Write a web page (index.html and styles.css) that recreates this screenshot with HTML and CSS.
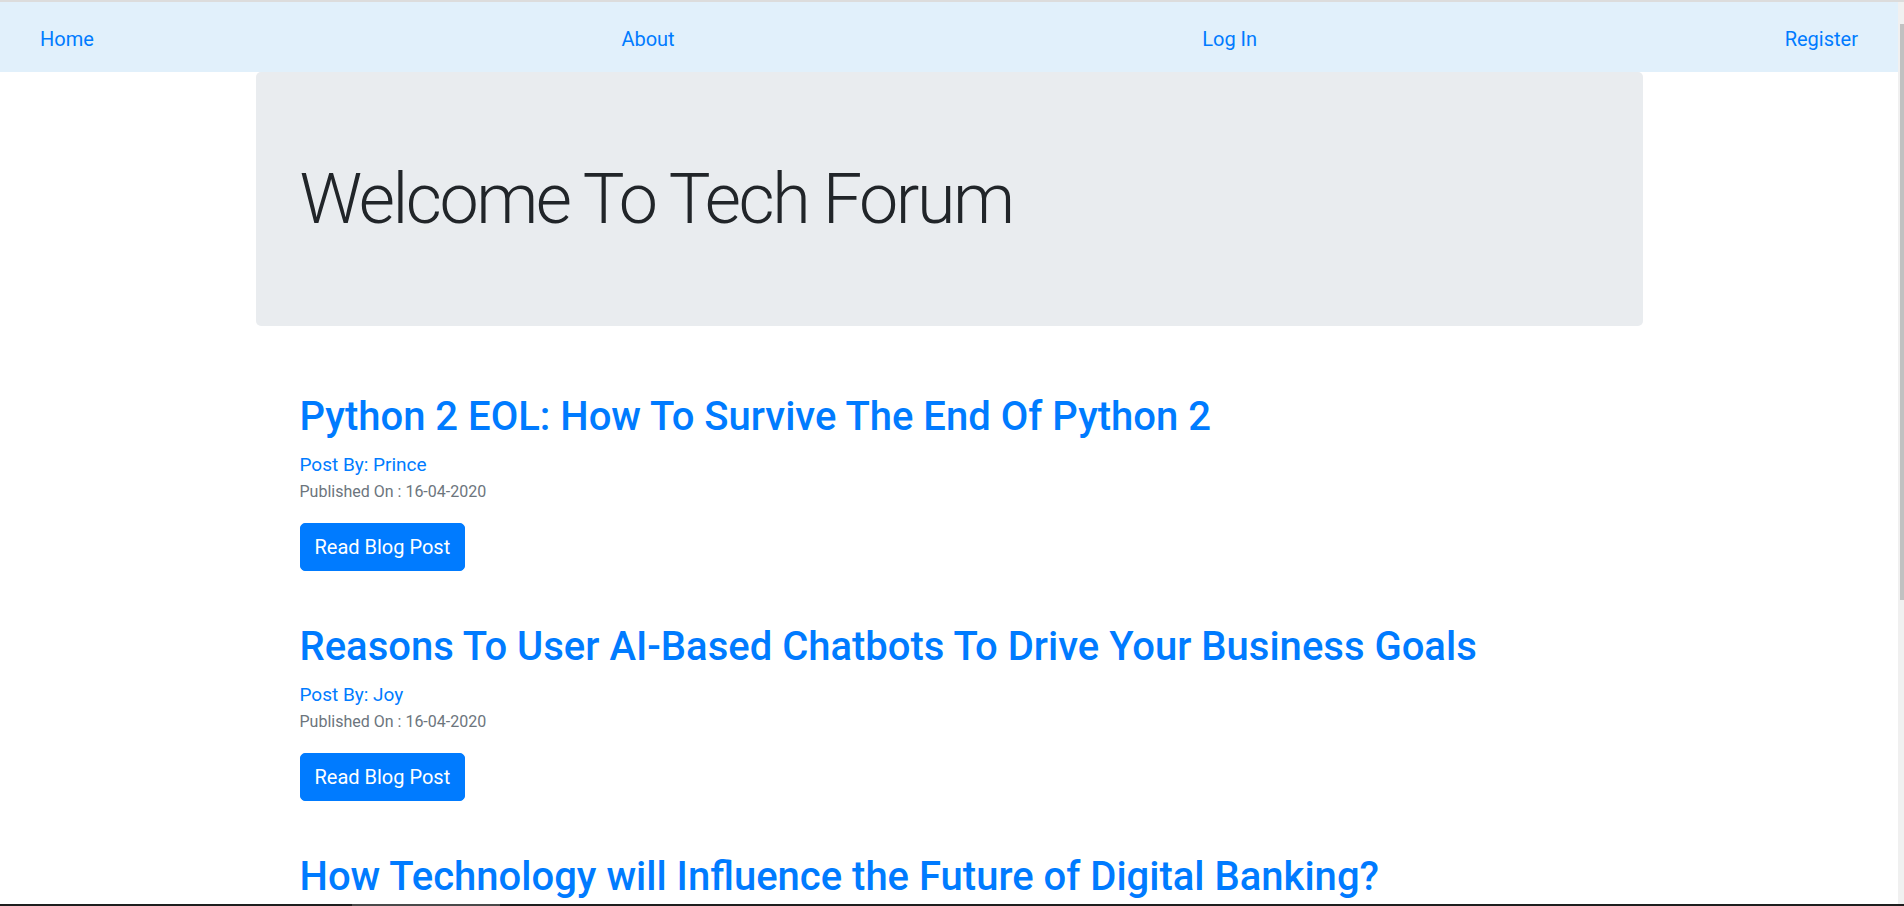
FILE: index.html
```html
<!DOCTYPE html>
<html lang="en">
<head>
<meta charset="utf-8">
<title>Tech Forum</title>
<link rel="stylesheet" href="styles.css">
</head>
<body>
<div class="topline"></div>
<div class="frame">
  <div class="page">
    <nav class="navbar">
      <a class="nav-link" href="#">Home</a>
      <a class="nav-link" href="#">About</a>
      <a class="nav-link" href="#">Log In</a>
      <a class="nav-link" href="#">Register</a>
    </nav>
    <div class="container">
      <header class="jumbotron">
        <h1 class="display">Welcome To Tech Forum</h1>
      </header>
      <main class="posts">
        <article class="post">
          <h1 class="post-title">Python 2 EOL: How To Survive The End Of Python 2</h1>
          <p class="post-author">Post By: Prince</p>
          <p class="post-date">Published On : 16-04-2020</p>
          <a class="btn" href="#">Read Blog Post</a>
        </article>
        <article class="post">
          <h1 class="post-title">Reasons To User AI-Based Chatbots To Drive Your Business Goals</h1>
          <p class="post-author">Post By: Joy</p>
          <p class="post-date">Published On : 16-04-2020</p>
          <a class="btn" href="#">Read Blog Post</a>
        </article>
        <article class="post">
          <h1 class="post-title">How Technology will Influence the Future of Digital Banking?</h1>
          <p class="post-author">Post By: Prince</p>
          <p class="post-date">Published On : 16-04-2020</p>
          <a class="btn" href="#">Read Blog Post</a>
        </article>
      </main>
    </div>
  </div>
  <div class="scrollbar"><div class="scroll-thumb"></div></div>
</div>
<div class="bottomline"><span class="bottom-seg"></span></div>
</body>
</html>
```

FILE: styles.css
```css
html, body {
  margin: 0;
  padding: 0;
  height: 100%;
  overflow: hidden;
}

body {
  display: flex;
  flex-direction: column;
  font-family: Roboto, "Open Sans", sans-serif;
  color: #212529;
  background: #ffffff;
}

.topline {
  height: 2px;
  flex: none;
  background: #dcdcdc;
}

.frame {
  flex: 1;
  min-height: 0;
  display: flex;
}

.page {
  flex: 1;
  min-width: 0;
  overflow: hidden;
  background: #ffffff;
}

.scrollbar {
  width: 6px;
  flex: none;
  background: #f0f0f0;
  padding-top: 22px;
  box-sizing: border-box;
  display: flex;
  justify-content: flex-end;
}

.scroll-thumb {
  width: 4px;
  height: 576px;
  background: #c1c1c1;
}

.bottomline {
  height: 2px;
  flex: none;
  background: #1e1e1e;
  display: flex;
}

.bottom-seg {
  margin-left: 352px;
  width: 148px;
  background: #4a4a4a;
}

.navbar {
  height: 70px;
  box-sizing: border-box;
  display: flex;
  align-items: center;
  justify-content: space-between;
  padding: 4px 40px 0;
  background: #e1f0fb;
}

.nav-link {
  font-size: 20px;
  line-height: 24px;
  color: #007bff;
  text-decoration: none;
}

.container {
  width: 1387px;
  margin: 0 auto;
}

.jumbotron {
  background: #e9ecef;
  border-radius: 5px;
  padding: 84px 44px 84px;
}

.display {
  margin: 0;
  font-size: 70px;
  letter-spacing: -0.035em;
  font-weight: 300;
  line-height: 86.4px;
  color: #212529;
}

.posts {
  padding: 67px 44px 0;
}

.post {
  margin-bottom: 52px;
}

.post-title {
  margin: 0 0 10px;
  font-size: 40px;
  font-weight: 500;
  line-height: 1.2;
  color: #007bff;
}

.post-author {
  margin: 0;
  font-size: 19px;
  line-height: 1.5;
  color: #007bff;
}

.post-date {
  margin: 0 0 19.5px;
  font-size: 16px;
  line-height: 1.5;
  color: #6c757d;
}

.btn {
  display: inline-block;
  padding: 8px 14px;
  font-size: 20px;
  line-height: 30px;
  color: #ffffff;
  background: #007bff;
  border: 1px solid #007bff;
  border-radius: 5px;
  text-decoration: none;
}
```
